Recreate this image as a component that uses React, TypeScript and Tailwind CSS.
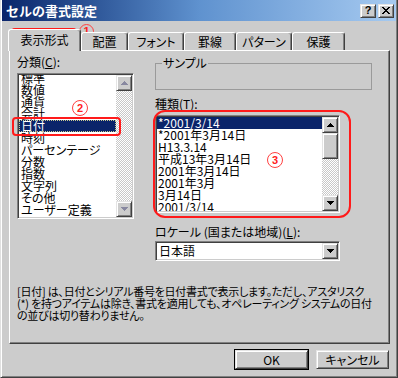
import React from "react";

const FONT = "font-['Noto_Sans_CJK_JP',sans-serif] [font-feature-settings:'palt']";
const RAISED =
  "bg-[#cccccc] border border-t-[#e4e4e4] border-l-[#e4e4e4] border-r-[#404040] border-b-[#404040] shadow-[inset_1px_1px_0_#ffffff,inset_-1px_-1px_0_#808080]";
const SUNKEN =
  "bg-white border border-t-[#808080] border-l-[#808080] border-r-white border-b-white shadow-[inset_1px_1px_0_#404040,inset_-1px_-1px_0_#cccccc]";
const DITHER =
  "bg-[repeating-conic-gradient(#ffffff_0%_25%,#c8c8c8_0%_50%)] bg-[length:2px_2px]";

function Arrow({ dir, color = "#000000" }: { dir: "up" | "down"; color?: string }) {
  const d =
    dir === "up"
      ? "M3 0h1v1H3zM2 1h3v1H2zM1 2h5v1H1zM0 3h7v1H0z"
      : "M0 0h7v1H0zM1 1h5v1H1zM2 2h3v1H2zM3 3h1v1H3z";
  return (
    <svg width="7" height="4" viewBox="0 0 7 4" shapeRendering="crispEdges">
      <path d={d} fill={color} />
    </svg>
  );
}

const list1 = [
  "標準",
  "数値",
  "通貨",
  "会計",
  "日付",
  "時刻",
  "パーセンテージ",
  "分数",
  "指数",
  "文字列",
  "その他",
  "ユーザー定義",
];

const list2 = [
  "*2001/3/14",
  "*2001年3月14日",
  "H13.3.14",
  "平成13年3月14日",
  "2001年3月14日",
  "2001年3月",
  "3月14日",
  "2001/3/14",
];

const tabs = [
  { label: "配置", w: "w-[47px]" },
  { label: "フォント", w: "w-[56px]" },
  { label: "罫線", w: "w-[52px]" },
  { label: "パターン", w: "w-[56px]" },
  { label: "保護", w: "w-[53px]" },
];

export default function App() {
  return (
    <div
      className={`relative w-[398px] h-[378px] overflow-hidden bg-[#cccccc] border-l border-r border-b border-l-[#e0e0e0] border-r-[#404040] border-b-[#404040] shadow-[inset_1px_0_0_#ffffff,inset_-1px_-1px_0_#808080] text-[12px] leading-[12px] text-black ${FONT}`}
    >
      {/* Title bar */}
      <div className="mx-[1px] h-[21px] bg-linear-to-r from-[#0a246a] via-[#5f92cf] to-[#a6caf0] flex items-center pl-[4px] pr-[2px]">
        <span className="flex-1 text-white font-bold text-[13px] leading-[14px] [font-feature-settings:normal]">
          セルの書式設定
        </span>
        <div className="flex gap-[2px]">
          <div className={`${RAISED} w-[16px] h-[14px] flex items-center justify-center font-['Liberation_Sans',sans-serif] font-bold text-[11px] leading-[11px]`}>
            ?
          </div>
          <div className={`${RAISED} w-[16px] h-[14px] flex items-center justify-center`}>
            <svg width="8" height="7" viewBox="0 0 8 7" shapeRendering="crispEdges">
              <path
                d="M0 0h2v1H0zM6 0h2v1H6zM1 1h2v1H1zM5 1h2v1H5zM2 2h4v1H2zM3 3h2v1H3zM2 4h4v1H2zM1 5h2v1H1zM5 5h2v1H5zM0 6h2v1H0zM6 6h2v1H6z"
                fill="#000"
              />
            </svg>
          </div>
        </div>
      </div>

      {/* Tab strip */}
      <div className="relative z-10 h-[30px] flex items-end pl-[7px]">
        <div className="relative z-10 w-[73px] h-[22px] bg-[#cccccc] border-l border-t border-r border-l-white border-t-white border-r-[#404040] shadow-[inset_-1px_0_0_#808080] rounded-t-[3px] flex justify-center pt-[4px]">
          表示形式
        </div>
        {tabs.map((t) => (
          <div
            key={t.label}
            className={`${t.w} h-[18px] mb-[1px] bg-[#cccccc] border-l border-t border-r border-l-white border-t-white border-r-[#404040] shadow-[inset_-1px_0_0_#808080] rounded-t-[3px] flex justify-center pt-[3px] whitespace-nowrap`}
          >
            {t.label}
          </div>
        ))}
      </div>

      {/* Panel */}
      <div className="ml-[8px] -mt-[1px] w-[381px] h-[294px] border-l border-t border-r border-b border-l-white border-t-white border-r-[#404040] border-b-[#404040] shadow-[inset_-1px_-1px_0_#808080] pl-[7px]">
        <div className="flex">
          {/* left column */}
          <div className="w-[117px] flex flex-col">
            <div className="mt-[5px] h-[12px]">
              分類(<span className="underline">C</span>):
            </div>
            <div className={`mt-[5px] h-[146px] ${SUNKEN} p-[1px] flex`}>
              <div className="flex-1 overflow-hidden">
                <div className="-mt-[3px]">
                  {list1.map((it) => (
                    <div
                      key={it}
                      className={
                        it === "日付"
                          ? "h-[12px] pl-[2px] whitespace-nowrap bg-[#0a246a] text-white outline-1 outline-dotted outline-[#c8c890] -outline-offset-1"
                          : "h-[12px] pl-[2px] whitespace-nowrap"
                      }
                    >
                      {it}
                    </div>
                  ))}
                </div>
              </div>
              <div className="w-[16px] flex flex-col">
                <div className={`${RAISED} h-[16px] flex items-center justify-center`}>
                  <Arrow dir="up" color="#8888a0" />
                </div>
                <div className={`flex-1 ${DITHER}`} />
                <div className={`${RAISED} h-[16px] flex items-center justify-center`}>
                  <Arrow dir="down" color="#8888a0" />
                </div>
              </div>
            </div>
          </div>

          {/* right column */}
          <div className="ml-[21px] flex flex-col">
            <div className="relative mt-[12px] w-[217px] h-[27px] border border-[#9a9a9a]">
              <span className="absolute -top-[7px] left-[6px] bg-[#cccccc] px-[1px] leading-[12px]">
                サンプル
              </span>
            </div>
            <div className="mt-[8px] h-[12px]">
              種類(<span className="underline">T</span>):
            </div>
            <div className={`mt-[5px] w-[185px] h-[98px] ${SUNKEN} p-[1px] flex`}>
              <div className="flex-1 overflow-hidden">
                {list2.map((it, i) => (
                  <div
                    key={it + i}
                    className={
                      i === 0
                        ? "h-[12px] pl-[1px] whitespace-nowrap bg-[#0a246a] text-white"
                        : "h-[12px] pl-[1px] whitespace-nowrap"
                    }
                  >
                    {it}
                  </div>
                ))}
              </div>
              <div className="w-[16px] flex flex-col">
                <div className={`${RAISED} h-[16px] flex items-center justify-center`}>
                  <Arrow dir="up" />
                </div>
                <div className={`${RAISED} h-[26px]`} />
                <div className={`flex-1 ${DITHER}`} />
                <div className={`${RAISED} h-[16px] flex items-center justify-center`}>
                  <Arrow dir="down" />
                </div>
              </div>
            </div>
            <div className="mt-[13px] h-[12px] whitespace-nowrap">
              ロケール (国または地域)(<span className="underline">L</span>):
            </div>
            <div className={`mt-[3px] w-[185px] h-[20px] ${SUNKEN} p-[1px] flex`}>
              <div className="flex-1 bg-white pl-[2px] flex items-center">日本語</div>
              <div className={`${RAISED} w-[16px] flex items-center justify-center`}>
                <Arrow dir="down" />
              </div>
            </div>
          </div>
        </div>

        <p className="mt-[24px] whitespace-nowrap text-[11px] leading-[12px] tracking-[-0.25px]">
          [日付] は、日付とシリアル番号を日付書式で表示します。ただし、アスタリスク
          <br />
          (*) を持つアイテムは除き、書式を適用しても、オペレーティング システムの日付
          <br />
          の並びは切り替わりません。
        </p>
      </div>

      {/* Buttons */}
      <div className="mt-[5px] flex justify-end items-center gap-[7px] pr-[8px]">
        <div className="w-[75px] h-[21px] border border-black flex">
          <div className={`${RAISED} flex-1 flex items-center justify-center`}>OK</div>
        </div>
        <div className={`${RAISED} w-[73px] h-[19px] flex items-center justify-center`}>
          キャンセル
        </div>
      </div>

      {/* Red annotations */}
      <div className="absolute left-[9px] top-[28px] w-[68px] h-[23px] rounded-[5px] border-2 border-[#ff1a1a]" />
      <div className="absolute left-[78px] top-[24px] w-[15px] h-[15px] rounded-full border border-[#ff4040] text-[#ff2020] text-[11px] font-bold leading-none flex items-center justify-center font-['Liberation_Sans',sans-serif]">
        1
      </div>
      <div className="absolute left-[11px] top-[117px] w-[109px] h-[19px] rounded-[4px] border-2 border-[#ff1a1a]" />
      <div className="absolute left-[71px] top-[100px] w-[16px] h-[16px] rounded-full border border-[#ff4040] text-[#ff2020] text-[11px] font-bold leading-none flex items-center justify-center font-['Liberation_Sans',sans-serif]">
        2
      </div>
      <div className="absolute left-[152px] top-[110px] w-[198px] h-[108px] rounded-[12px] border-2 border-[#ff1a1a]" />
      <div className="absolute left-[266px] top-[152px] w-[16px] h-[16px] rounded-full border border-[#ff4040] text-[#ff2020] text-[11px] font-bold leading-none flex items-center justify-center font-['Liberation_Sans',sans-serif]">
        3
      </div>
    </div>
  );
}
